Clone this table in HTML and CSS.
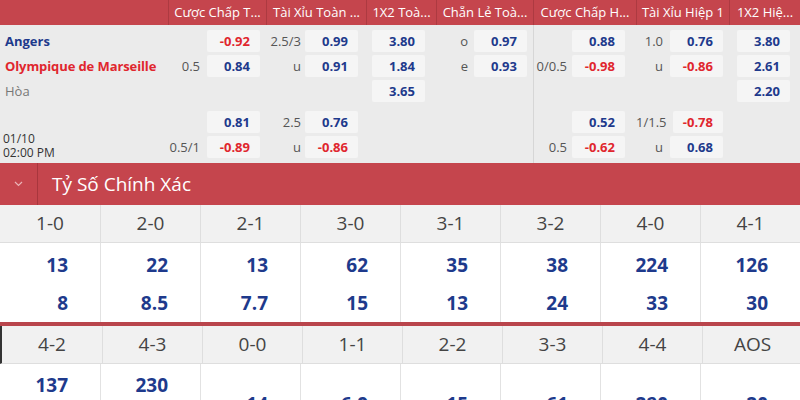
FILE: index.html
```html
<!DOCTYPE html>
<html lang="vi">
<head>
<meta charset="utf-8">
<title>Tỷ Số Chính Xác</title>
<link rel="stylesheet" href="styles.css">
</head>
<body>
<div class="page">
  <div class="odds">
    <div class="odds-head">
      <div class="h h-team"></div>
      <div class="h">Cược Chấp T...</div>
      <div class="h">Tài Xỉu Toàn ...</div>
      <div class="h">1X2 Toà...</div>
      <div class="h">Chẵn Lẻ Toà...</div>
      <div class="h">Cược Chấp H...</div>
      <div class="h">Tài Xỉu Hiệp 1</div>
      <div class="h">1X2 Hiệ...</div>
    </div>

    <div class="group g1">
      <div class="cell team-cell">
        <div class="line team home">Angers</div>
        <div class="line team away">Olympique de Marseille</div>
        <div class="line team draw">Hòa</div>
      </div>
      <div class="cell mk c1">
        <div class="line"><span class="lab"></span><span class="box neg">-0.92</span></div>
        <div class="line"><span class="lab">0.5</span><span class="box">0.84</span></div>
      </div>
      <div class="cell mk c2">
        <div class="line"><span class="lab">2.5/3</span><span class="box">0.99</span></div>
        <div class="line"><span class="lab">u</span><span class="box">0.91</span></div>
      </div>
      <div class="cell mk c3">
        <div class="line"><span class="box">3.80</span></div>
        <div class="line"><span class="box">1.84</span></div>
        <div class="line"><span class="box">3.65</span></div>
      </div>
      <div class="cell mk c4">
        <div class="line"><span class="lab">o</span><span class="box">0.97</span></div>
        <div class="line"><span class="lab">e</span><span class="box">0.93</span></div>
      </div>
      <div class="cell mk c5 split">
        <div class="line"><span class="lab"></span><span class="box">0.88</span></div>
        <div class="line"><span class="lab">0/0.5</span><span class="box neg">-0.98</span></div>
      </div>
      <div class="cell mk c6">
        <div class="line"><span class="lab">1.0</span><span class="box">0.76</span></div>
        <div class="line"><span class="lab">u</span><span class="box neg">-0.86</span></div>
      </div>
      <div class="cell mk c7">
        <div class="line"><span class="box">3.80</span></div>
        <div class="line"><span class="box">2.61</span></div>
        <div class="line"><span class="box">2.20</span></div>
      </div>
    </div>

    <div class="group g2">
      <div class="cell team-cell date-cell">
        <div class="date">01/10</div>
        <div class="date">02:00 PM</div>
      </div>
      <div class="cell mk c1">
        <div class="line"><span class="lab"></span><span class="box">0.81</span></div>
        <div class="line"><span class="lab">0.5/1</span><span class="box neg">-0.89</span></div>
      </div>
      <div class="cell mk c2">
        <div class="line"><span class="lab">2.5</span><span class="box">0.76</span></div>
        <div class="line"><span class="lab">u</span><span class="box neg">-0.86</span></div>
      </div>
      <div class="cell mk c3"></div>
      <div class="cell mk c4"></div>
      <div class="cell mk c5 split">
        <div class="line"><span class="lab"></span><span class="box">0.52</span></div>
        <div class="line"><span class="lab">0.5</span><span class="box neg">-0.62</span></div>
      </div>
      <div class="cell mk c6">
        <div class="line"><span class="lab">1/1.5</span><span class="box neg">-0.78</span></div>
        <div class="line"><span class="lab">u</span><span class="box">0.68</span></div>
      </div>
      <div class="cell mk c7"></div>
    </div>
  </div>

  <div class="section-bar">
    <div class="chev">
      <svg width="9" height="6" viewBox="0 0 9 6"><polyline points="1,1 4.5,4.5 8,1" fill="none" stroke="#eab4b7" stroke-width="1.2"/></svg>
    </div>
    <div class="section-title">Tỷ Số Chính Xác</div>
  </div>

  <div class="scores">
    <div class="score-block">
      <div class="sc-row sc-head">
        <div class="sc-cell">1-0</div><div class="sc-cell">2-0</div><div class="sc-cell">2-1</div><div class="sc-cell">3-0</div>
        <div class="sc-cell">3-1</div><div class="sc-cell">3-2</div><div class="sc-cell">4-0</div><div class="sc-cell">4-1</div>
      </div>
      <div class="sc-row sc-vals">
        <div class="sc-cell"><span>13</span><span>8</span></div>
        <div class="sc-cell"><span>22</span><span>8.5</span></div>
        <div class="sc-cell"><span>13</span><span>7.7</span></div>
        <div class="sc-cell"><span>62</span><span>15</span></div>
        <div class="sc-cell"><span>35</span><span>13</span></div>
        <div class="sc-cell"><span>38</span><span>24</span></div>
        <div class="sc-cell"><span>224</span><span>33</span></div>
        <div class="sc-cell"><span>126</span><span>30</span></div>
      </div>
    </div>
    <div class="score-block second">
      <div class="sc-row sc-head">
        <div class="sc-cell">4-2</div><div class="sc-cell">4-3</div><div class="sc-cell">0-0</div><div class="sc-cell">1-1</div>
        <div class="sc-cell">2-2</div><div class="sc-cell">3-3</div><div class="sc-cell">4-4</div><div class="sc-cell">AOS</div>
      </div>
      <div class="sc-row sc-vals">
        <div class="sc-cell"><span>137</span><span>75</span></div>
        <div class="sc-cell"><span>230</span><span>110</span></div>
        <div class="sc-cell"><span>14</span></div>
        <div class="sc-cell"><span>6.9</span></div>
        <div class="sc-cell"><span>15</span></div>
        <div class="sc-cell"><span>61</span></div>
        <div class="sc-cell"><span>280</span></div>
        <div class="sc-cell"><span>20</span></div>
      </div>
    </div>
  </div>
</div>
</body>
</html>
```

FILE: styles.css
```css
* { box-sizing: border-box; }
html, body { margin: 0; padding: 0; }
body {
  width: 800px;
  height: 400px;
  overflow: hidden;
  background: #ffffff;
  font-family: "Open Sans", "Noto Sans", "DejaVu Sans", sans-serif;
  color: #333;
}
.page { width: 800px; }

.odds { background: #ebebeb; }

.odds-head,
.group {
  display: grid;
  grid-template-columns: 168px 98px 100px 70px 97px 103px 93px 71px;
}

.odds-head {
  height: 25px;
  background: #c5454d;
}
.h {
  color: #fff;
  font-size: 13px;
  line-height: 25px;
  text-align: center;
  white-space: nowrap;
  overflow: hidden;
  border-left: 1px solid #ad3a41;
  padding: 0 4px;
}
.h-team { border-left: 0; }

.cell {
  display: flex;
  flex-direction: column;
  gap: 3px;
}
.g1 .cell { padding: 5px 0 1px; }
.g2 .cell { padding: 8px 0 5px; }

.split { border-left: 1px solid #d6d6d6; }

.line {
  height: 22px;
  display: flex;
  align-items: center;
  justify-content: flex-end;
}

.team-cell .line { justify-content: flex-start; padding-left: 5px; }
.team { font-size: 13px; font-weight: 700; white-space: nowrap; }
.home { color: #1e3a8c; }
.away { color: #e0262e; letter-spacing: -0.1px; }
.draw { color: #777; font-weight: 400; }

.g2 .date-cell { justify-content: flex-end; gap: 0; padding: 0 0 3px 3px; }
.date { font-size: 12px; line-height: 14px; height: 14px; color: #333; white-space: nowrap; }

.lab {
  font-size: 13px;
  color: #555;
  white-space: nowrap;
}
.box {
  width: 53px;
  height: 22px;
  background: #f5f5f5;
  border-radius: 2px;
  text-align: right;
  padding-right: 10px;
  font-size: 13px;
  font-weight: 700;
  line-height: 22px;
  color: #1e3a8c;
}
.box.neg { color: #e0262e; }

.c1 { padding-right: 6px !important; }
.c1 .lab { margin-right: 7px; }
.c2 { padding-right: 8px !important; }
.c2 .lab { margin-right: 4px; }
.c3 { padding-right: 11px !important; }
.c4 { padding-right: 6px !important; }
.c4 .lab { margin-right: 6px; }
.c5 { padding-right: 11px !important; }
.c5 .lab { margin-right: 5px; }
.c6 { padding-right: 6px !important; }
.c6 .lab { margin-right: 7px; }
.c7 { padding-right: 10px !important; }

.section-bar {
  height: 42px;
  background: #c5454d;
  display: flex;
  align-items: stretch;
}
.chev {
  width: 38px;
  border-right: 1px solid #a8363d;
  display: flex;
  align-items: center;
  justify-content: center;
  padding-bottom: 1px;
}
.section-title {
  color: #fff;
  font-size: 19px;
  line-height: 42px;
  padding-left: 14px;
}

.sc-row {
  display: grid;
  grid-template-columns: repeat(8, 100px);
}
.sc-head {
  height: 38px;
  background: #f1f1f1;
  border-bottom: 1px solid #dedede;
}
.sc-head .sc-cell {
  font-size: 19px;
  color: #444;
  line-height: 37px;
  text-align: center;
  border-left: 1px solid #dedede;
}
.sc-head .sc-cell:first-child { border-left: 0; }

.sc-vals { height: 79px; background: #fff; }
.sc-vals .sc-cell {
  border-left: 1px solid #e2e2e2;
  display: flex;
  flex-direction: column;
  justify-content: center;
  align-items: flex-end;
  padding-right: 32px;
  padding-top: 2px;
}
.sc-vals .sc-cell:first-child { border-left: 0; }
.sc-vals span {
  font-size: 19px;
  font-weight: 700;
  color: #1e3a8c;
  line-height: 38px;
}

.second { border-top: 4px solid #b9454c; }
.second .sc-head { border-left: 2px solid #333; }
.second .sc-vals .sc-cell { padding-top: 0; }
```
